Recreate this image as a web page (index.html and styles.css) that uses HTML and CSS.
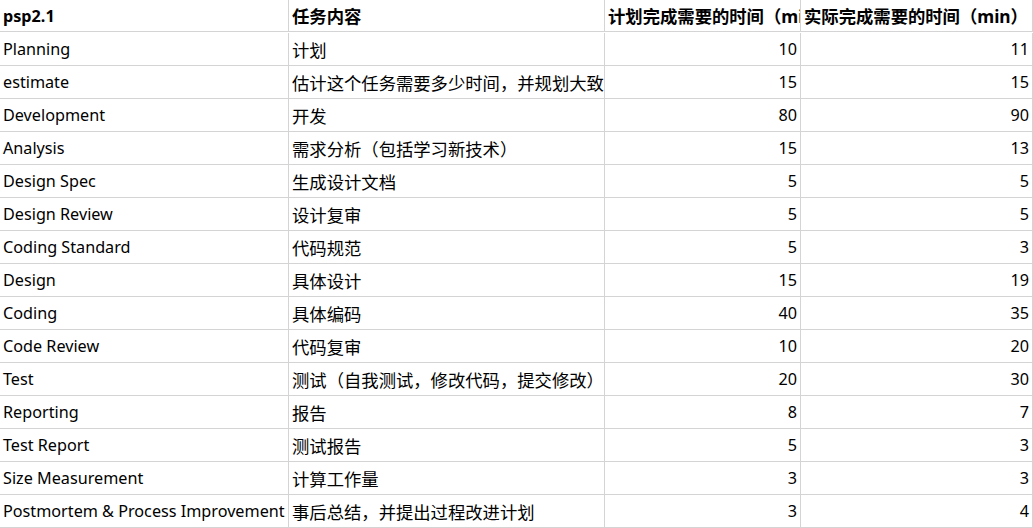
FILE: index.html
```html
<!DOCTYPE html>
<html lang="zh">
<head>
<meta charset="utf-8">
<link rel="stylesheet" href="styles.css">
</head>
<body>
<div class="sheet">
  <div class="cell c1 head">psp2.1</div>
  <div class="cell c2 head">任务内容</div>
  <div class="cell c3 head zh">计划完成需要的时间（min）</div>
  <div class="cell c4 head zh">实际完成需要的时间（min）</div>

  <div class="cell c1">Planning</div><div class="cell c2">计划</div><div class="cell c3 num">10</div><div class="cell c4 num">11</div>
  <div class="cell c1">estimate</div><div class="cell c2">估计这个任务需要多少时间，并规划大致工作步骤</div><div class="cell c3 num">15</div><div class="cell c4 num">15</div>
  <div class="cell c1">Development</div><div class="cell c2">开发</div><div class="cell c3 num">80</div><div class="cell c4 num">90</div>
  <div class="cell c1">Analysis</div><div class="cell c2">需求分析（包括学习新技术）</div><div class="cell c3 num">15</div><div class="cell c4 num">13</div>
  <div class="cell c1">Design Spec</div><div class="cell c2">生成设计文档</div><div class="cell c3 num">5</div><div class="cell c4 num">5</div>
  <div class="cell c1">Design Review</div><div class="cell c2">设计复审</div><div class="cell c3 num">5</div><div class="cell c4 num">5</div>
  <div class="cell c1">Coding Standard</div><div class="cell c2">代码规范</div><div class="cell c3 num">5</div><div class="cell c4 num">3</div>
  <div class="cell c1">Design</div><div class="cell c2">具体设计</div><div class="cell c3 num">15</div><div class="cell c4 num">19</div>
  <div class="cell c1">Coding</div><div class="cell c2">具体编码</div><div class="cell c3 num">40</div><div class="cell c4 num">35</div>
  <div class="cell c1">Code Review</div><div class="cell c2">代码复审</div><div class="cell c3 num">10</div><div class="cell c4 num">20</div>
  <div class="cell c1">Test</div><div class="cell c2">测试（自我测试，修改代码，提交修改）</div><div class="cell c3 num">20</div><div class="cell c4 num">30</div>
  <div class="cell c1">Reporting</div><div class="cell c2">报告</div><div class="cell c3 num">8</div><div class="cell c4 num">7</div>
  <div class="cell c1">Test Report</div><div class="cell c2">测试报告</div><div class="cell c3 num">5</div><div class="cell c4 num">3</div>
  <div class="cell c1">Size Measurement</div><div class="cell c2">计算工作量</div><div class="cell c3 num">3</div><div class="cell c4 num">3</div>
  <div class="cell c1">Postmortem &amp; Process Improvement</div><div class="cell c2">事后总结，并提出过程改进计划</div><div class="cell c3 num">3</div><div class="cell c4 num">4</div>
</div>
</body>
</html>
```

FILE: styles.css
```css
html, body {
  margin: 0;
  padding: 0;
  background: #ffffff;
}

.sheet {
  display: grid;
  grid-template-columns: 289px 316px 196px 232px;
  grid-auto-rows: 33px;
  font-family: "Noto Sans", "Noto Sans CJK SC", sans-serif;
  font-size: 16.2px;
  color: #000000;
}

.cell {
  box-sizing: border-box;
  border-right: 1px solid #d4d4d4;
  border-bottom: 1px solid #d4d4d4;
  padding: 0 3px;
  display: flex;
  align-items: center;
  white-space: nowrap;
  overflow: hidden;
}

.c2,
.zh {
  font-size: 17.33px;
}

.head {
  height: 32px;
  align-self: start;
  font-weight: bold;
}

.num {
  justify-content: flex-end;
}
```
